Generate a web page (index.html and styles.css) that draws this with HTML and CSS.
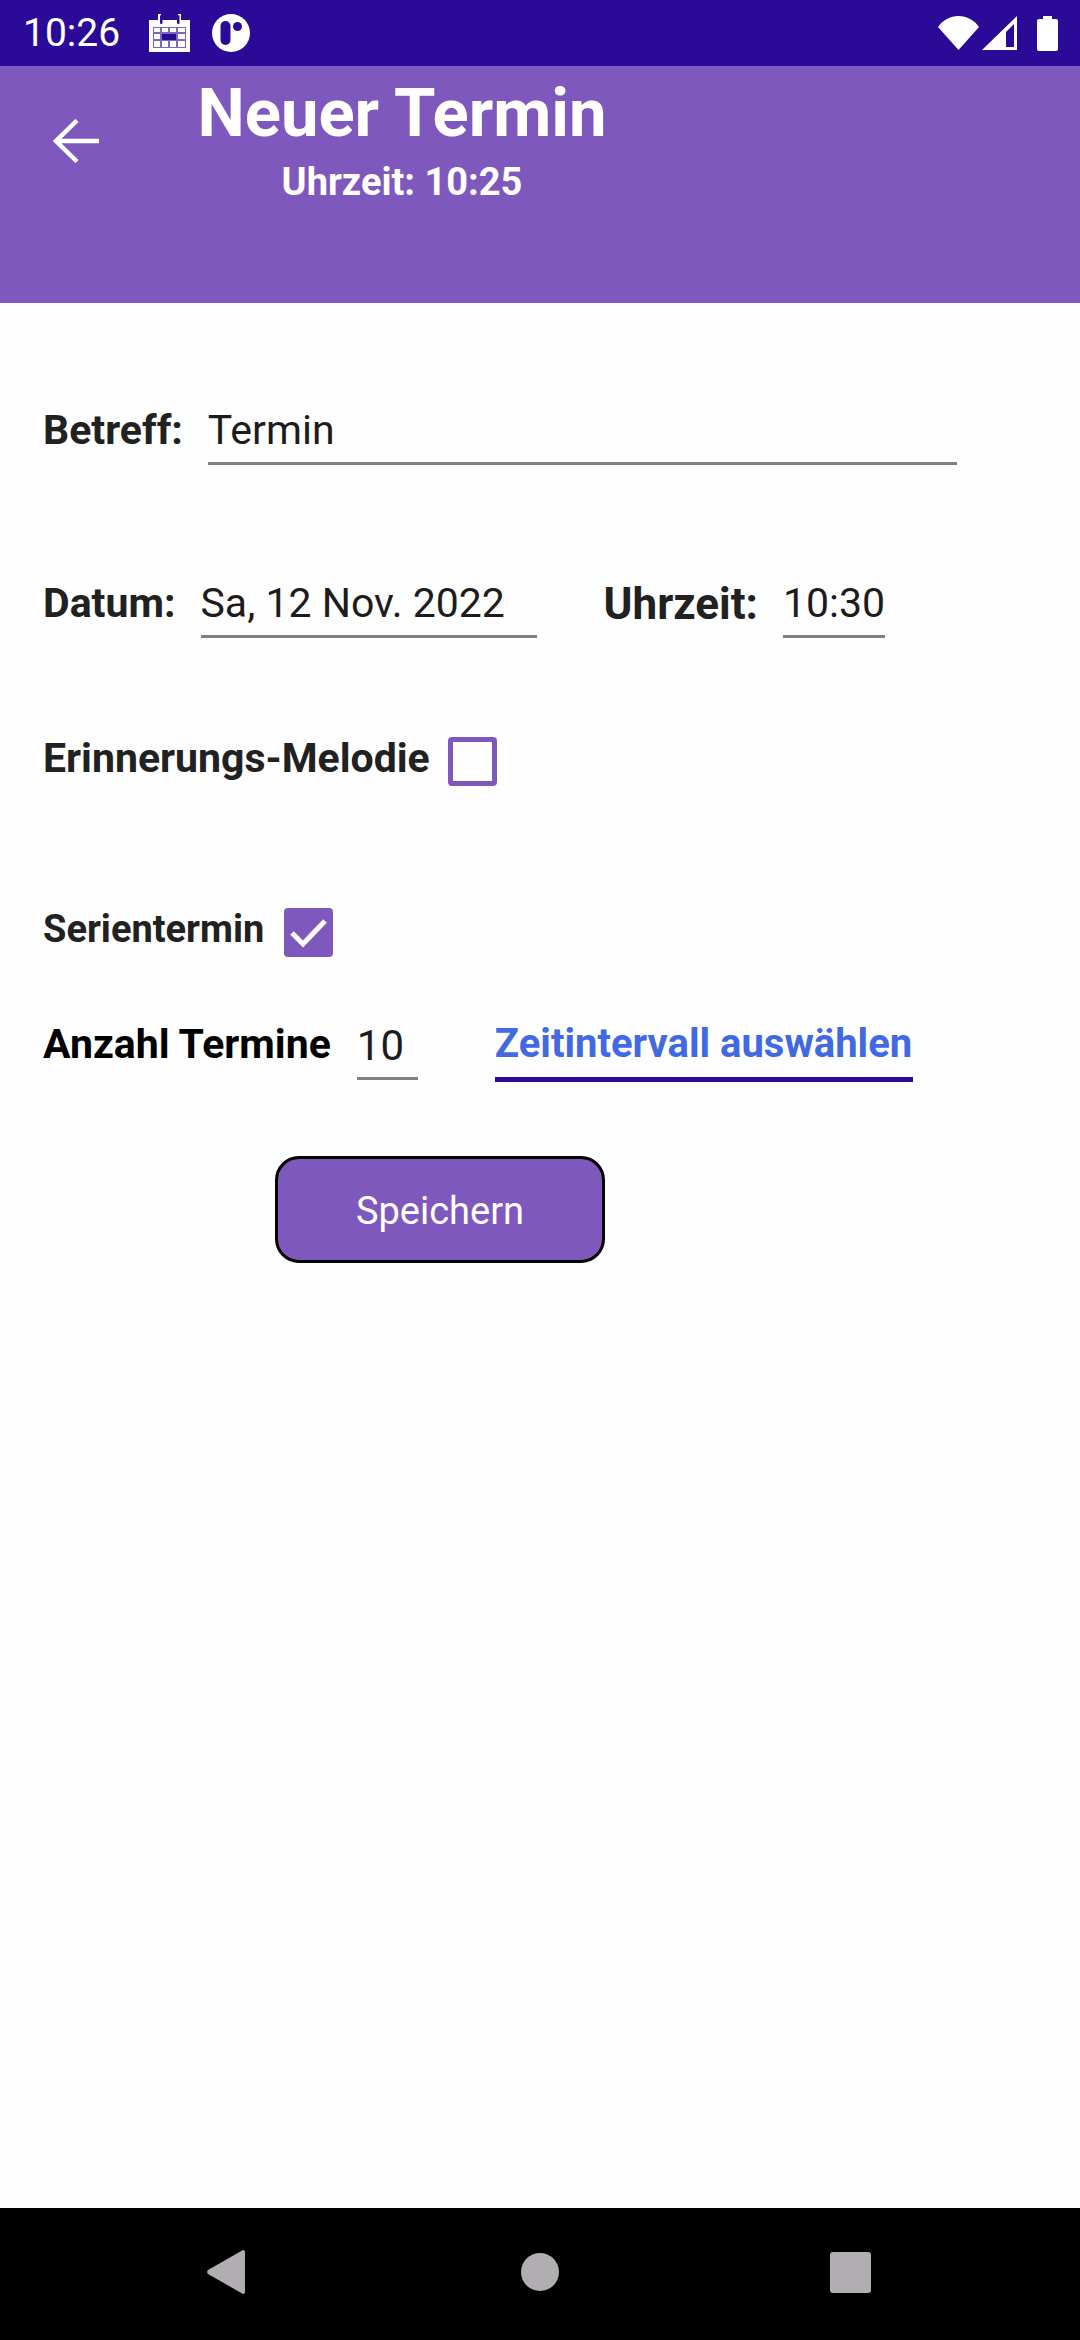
FILE: index.html
```html
<!DOCTYPE html>
<html lang="de">
<head>
<meta charset="utf-8">
<title>Neuer Termin</title>
<link rel="stylesheet" href="styles.css">
</head>
<body>
<div class="app">
  <div class="status">
    <span class="clock">10:26</span>
    <svg class="ic-cal" viewBox="0 0 41 38" width="41" height="38">
      <path fill="#fff" d="M0 6h9V0h3v6h17V0h3v6h9v32H0z"/>
      <rect x="11" y="1" width="2.5" height="9" rx="1.2" fill="#2a0a96"/>
      <rect x="28" y="1" width="2.5" height="9" rx="1.2" fill="#2a0a96"/>
      <rect x="4" y="13" width="33" height="21" fill="#7a68c0"/>
      <path fill="#fff" d="M5 14h6v4H5zM13 14h6v4h-6zM21 14h6v4h-6zM29 14h7v4h-7zM5 20h6v5H5zM29 20h7v5h-7zM5 27h6v6H5zM13 27h6v6h-6zM21 27h6v6h-6zM29 27h7v6h-7z"/>
      <rect x="13" y="20" width="14" height="6" fill="#2a0a96"/>
    </svg>
    <svg class="ic-logo" viewBox="0 0 38 38" width="38" height="38">
      <circle cx="19" cy="19" r="19" fill="#fff"/>
      <rect x="8.500" y="7" width="10" height="24" rx="5" fill="#2a0a96"/>
      <circle cx="25.500" cy="12.500" r="4.500" fill="#2a0a96"/>
    </svg>
    <span class="status-right">
      <svg viewBox="0 0 41 34" width="41" height="34"><path fill="#fff" d="M0 11C5 4 12 0 20.500 0S36 4 41 11L20.500 34z"/></svg>
      <svg viewBox="0 0 35 34" width="35" height="34"><path fill="#fff" fill-rule="evenodd" d="M35 0v34H0zM32 31V8l-8 8v15z"/></svg>
      <svg class="ic-bat" viewBox="0 0 21 35" width="21" height="35"><path fill="#fff" d="M6 0h9v3h4a2 2 0 0 1 2 2v28a2 2 0 0 1-2 2H2a2 2 0 0 1-2-2V5a2 2 0 0 1 2-2h4z"/></svg>
    </span>
  </div>

  <header class="bar">
    <svg class="back" viewBox="0 0 46 44" width="46" height="44"><path fill="none" stroke="#fff" stroke-width="4.500" d="M46 22H4M24 1.500 3 22l21 20.500"/></svg>
    <div class="titles">
      <h1 class="title">Neuer Termin</h1>
      <div class="sub">Uhrzeit: 10:25</div>
    </div>
  </header>

  <main class="form">
    <div class="row row-subject">
      <span class="label">Betreff:</span>
      <span class="field field-subject">Termin</span>
    </div>
    <div class="row row-date">
      <span class="label">Datum:</span>
      <span class="field field-date">Sa, 12 Nov. 2022</span>
      <span class="label label-time">Uhrzeit:</span>
      <span class="field field-time">10:30</span>
    </div>
    <div class="row row-melody">
      <span class="label">Erinnerungs-Melodie</span>
      <span class="check check-off"></span>
    </div>
    <div class="row row-series">
      <span class="label">Serientermin</span>
      <span class="check check-on">
        <svg viewBox="0 0 49 49" width="49" height="49"><path fill="none" stroke="#fff" stroke-width="5" d="M8 25l11 11L41 13"/></svg>
      </span>
    </div>
    <div class="row row-count">
      <span class="label label-black">Anzahl Termine</span>
      <span class="field field-count">10</span>
      <span class="link">Zeitintervall auswählen</span>
    </div>
    <button class="save">Speichern</button>
  </main>

  <nav class="nav">
    <svg viewBox="0 0 38 44" width="38" height="44"><path fill="#b0aeb0" d="M36 0a2 2 0 0 1 2 2v40a2 2 0 0 1-2 2L1 24a3 3 0 0 1 0-4z"/></svg>
    <span class="nav-home"></span>
    <span class="nav-recent"></span>
  </nav>
</div>
</body>
</html>
```

FILE: styles.css
```css
* { box-sizing: border-box; }
html, body { margin: 0; padding: 0; }
body { font-family: Roboto, "Liberation Sans", sans-serif; background: #fefefe; }
.app { width: 1080px; height: 2340px; display: flex; flex-direction: column; overflow: hidden; }

.status { height: 66px; flex: none; background: #2a0a96; display: flex; align-items: center; color: #fff; padding: 0 22px 0 23px; }
.clock { font-size: 39px; width: 126px; }
.ic-cal { margin-right: 22px; }
.status-right { margin-left: auto; display: flex; align-items: center; }
.status-right svg + svg { margin-left: 3px; }
.status-right .ic-bat { margin-left: 20px; }

.bar { height: 237px; flex: none; background: #7f58be; color: #fff; display: flex; align-items: flex-start; padding: 0 0 0 53px; }
.back { flex: none; margin-top: 53px; }
.titles { width: 500px; margin-left: 53px; margin-top: 10px; display: flex; flex-direction: column; align-items: center; }
.title { margin: 0; font-size: 67px; line-height: 74px; font-weight: 700; }
.sub { font-size: 38px; line-height: 44px; font-weight: 700; margin-top: 10px; }

.form { flex: 1; padding: 0 0 0 43px; display: flex; flex-direction: column; }
.row { display: flex; align-items: baseline; }
.label { font-size: 41px; font-weight: 700; color: #212121; white-space: nowrap; }
.label-black { color: #000; }
.field { font-size: 41px; color: #1c1c1c; border-bottom: 3px solid #808080; line-height: 50px; padding-bottom: 7px; }
.row-subject { margin-top: 102px; }
.field-subject { width: 749px; margin-left: 25px; }
.row-date { margin-top: 113px; }
.field-date { width: 336px; margin-left: 25px; }
.label-time { margin-left: 67px; font-size: 44px; align-self: flex-end; padding-bottom: 8px; }
.field-time { width: 102px; margin-left: 25px; }
.row-melody { margin-top: 96px; align-items: flex-start; }
.row-melody .label, .row-series .label { line-height: 48px; }
.row-series .label { font-size: 38px; }
.check { width: 49px; height: 49px; border: 5px solid #7f58be; border-radius: 4px; margin-left: 20px; margin-top: 3px; flex: none; display: block; background: #fefefe; }
.check-off { margin-left: 18px; }
.check-on { background: #7f58be; border: 0; }
.check-on svg { display: block; }
.row-series { margin-top: 119px; align-items: flex-start; }
.row-count { margin-top: 63px; align-items: flex-end; }
.row-count .label { padding-bottom: 14px; }
.field-count { width: 61px; margin: 0 0 2px 26px; padding-bottom: 6px; font-size: 42px; }
.link { font-size: 40px; font-weight: 700; color: #4169e1; margin-left: 77px; width: 418px; border-bottom: 5px solid #2a0a96; padding-bottom: 10px; white-space: nowrap; }
.save { width: 330px; height: 107px; margin: 74px 0 0 232px; background: #7f58be; color: #fff; border: 3px solid #000; border-radius: 24px; font-family: inherit; font-size: 38px; padding: 3px 0 0; }

.nav { height: 132px; flex: none; background: #000; display: flex; align-items: center; padding: 0 0 0 207px; }
.nav svg { display: block; margin-top: -4px; }
.nav-home { width: 38px; height: 38px; border-radius: 50%; background: #b0aeb0; margin: -4px 0 0 276px; }
.nav-recent { width: 41px; height: 41px; border-radius: 3px; background: #b0aeb0; margin: -4px 0 0 271px; }
```
